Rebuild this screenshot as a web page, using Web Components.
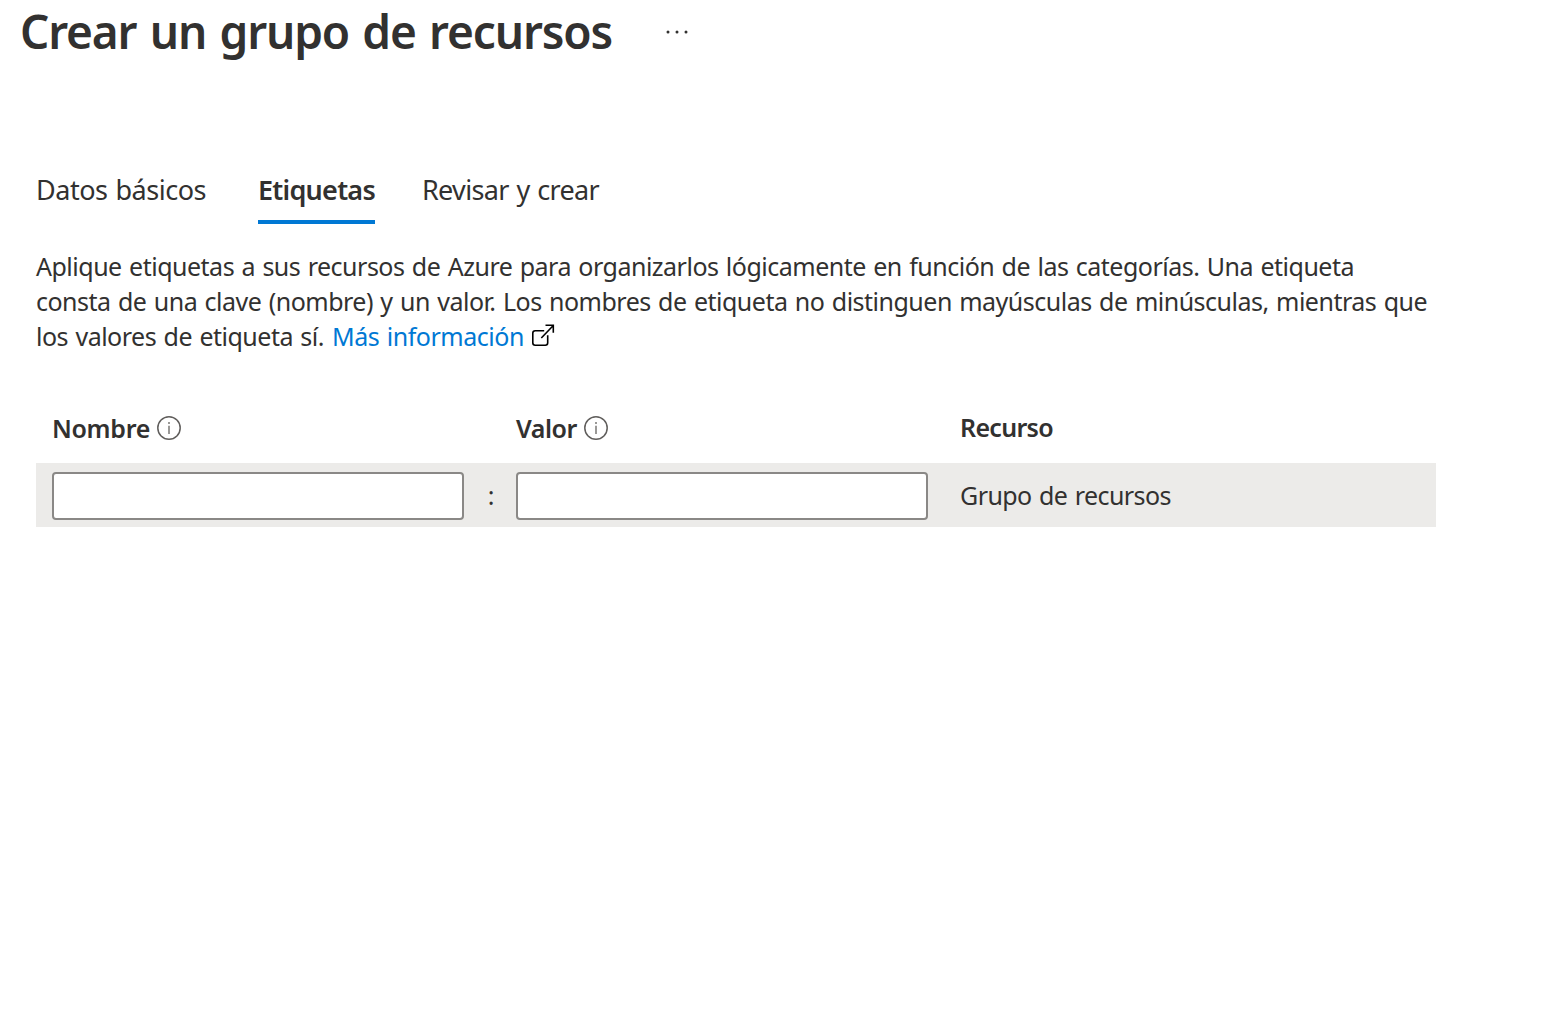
<!DOCTYPE html>
<html lang="es">
<head>
<meta charset="utf-8">
<title>Crear un grupo de recursos</title>
<style>
html, body { margin: 0; background: #fff; }
body { height: 1010px; overflow: hidden; font-family: "Noto Sans", "Open Sans", sans-serif; color: #323130; }
</style>
</head>
<body>
<create-group></create-group>
<script>
const define = (name, html, connected) => {
  const template = document.createElement('template');
  template.innerHTML = html;
  customElements.define(name, class extends HTMLElement {
    constructor() {
      super();
      this.attachShadow({ mode: 'open' }).append(template.content.cloneNode(true));
    }
    connectedCallback() { if (connected) connected.call(this); }
  });
};

// Text run whose tracking is adjusted to fill the width given in "w".
define('text-run', `
  <style>:host { display: inline-block; white-space: nowrap; } span { display: inline-block; white-space: pre; word-spacing: .055em; }</style>
  <span><slot></slot></span>`,
  function () {
    const span = this.shadowRoot.querySelector('span');
    const w = Number(this.getAttribute('w'));
    const n = this.textContent.length;
    const gap = (w - span.getBoundingClientRect().width) / n;
    span.style.letterSpacing = gap.toFixed(3) + 'px';
    this.style.width = w + 'px';
  });

define('info-icon', `
  <style>:host { display: block; width: 24px; height: 24px; } svg { display: block; }</style>
  <svg width="24" height="24" viewBox="0 0 24 24" fill="none" stroke="#605e5c" stroke-width="1.5">
    <circle cx="12" cy="12" r="11.2"/>
    <path d="M12 9.7V18M12 6v2" stroke="#7a7876"/>
  </svg>`);

define('external-icon', `
  <style>:host { display: block; width: 24px; height: 24px; } svg { display: block; }</style>
  <svg width="24" height="24" viewBox="0 0 24 24" fill="none" stroke="#000" stroke-width="1.6">
    <path d="M12.2 6.7H3.2Q.8 6.7.8 9.1V18.8Q.8 21.2 3.2 21.2H13.3Q15.7 21.2 15.7 18.8V11.2M9.3 14L21.3 1.5M13.5 1.3H21.3V8.8"/>
  </svg>`);

define('page-title', `
  <style>
    :host { display: flex; height: 60px; padding-left: 20px; }
    h1 { margin: 0; font-size: 46px; line-height: 62px; font-weight: 600; }
    button { margin: 26px 0 0 50px; padding: 4px; border: 0; background: none; height: 12px; display: block; }
    svg { display: block; }
  </style>
  <h1><slot></slot></h1>
  <button aria-label="Más"><svg width="22" height="4" viewBox="0 0 22 4" fill="#323130"><circle cx="2" cy="2" r="1.5"/><circle cx="11" cy="2" r="1.5"/><circle cx="20" cy="2" r="1.5"/></svg></button>`);

define('tab-item', `
  <style>
    :host { display: block; box-sizing: border-box; height: 54px; font-size: 27px; line-height: 40px; }
    :host([selected]) { font-weight: 600; border-bottom: 4px solid #0078d4; }
  </style><slot></slot>`);

define('tab-list', `
  <style>:host { display: flex; margin: 110px 0 0 36px; }
    ::slotted(:nth-child(2)) { margin: 0 47px 0 52px; }</style>
  <slot></slot>`);

define('tag-intro', `
  <style>
    :host { display: block; margin: 25px 0 0 36px; font-size: 25px; line-height: 35px; }
    .line { display: flex; height: 35px; }
    a { color: #0078d4; margin-left: 8px; }
    external-icon { margin: 5px 0 0 8px; }
  </style>
  <div class="line"><text-run w="1318">Aplique etiquetas a sus recursos de Azure para organizarlos lógicamente en función de las categorías. Una etiqueta</text-run></div>
  <div class="line"><text-run w="1391">consta de una clave (nombre) y un valor. Los nombres de etiqueta no distinguen mayúsculas de minúsculas, mientras que</text-run></div>
  <div class="line"><text-run w="288">los valores de etiqueta sí.</text-run><a><text-run w="192">Más información</text-run></a><external-icon></external-icon></div>`);

define('column-head', `
  <style>:host { display: flex; font-weight: 600; } info-icon { margin: 5px 0 0 7px; }
    :host([plain]) info-icon { display: none; } :host([plain]) { margin-top: -1px; }</style>
  <slot></slot><info-icon></info-icon>`);

define('text-box', `
  <style>:host { display: block; } input { display: block; box-sizing: border-box; width: 412px; height: 48px; border: 2px solid #8a8886; border-radius: 4px; background: #fff; outline: 0; }</style>
  <input type="text">`);

define('tag-table', `
  <style>
    :host { display: block; width: 1400px; margin: 57px 0 0 36px; font-size: 25px; line-height: 35px; }
    .row { display: grid; grid-template-columns: 412px 52px 412px auto; padding-left: 16px; }
    .head { height: 52px; }
    .body { height: 64px; background: #ecebe9; align-items: center; }
    .body text-box { padding-top: 2px; }
    .colon { text-align: center; padding-left: 2px; }
    .last { margin-left: 32px; }
  </style>
  <div class="row head">
    <column-head><text-run w="98">Nombre</text-run></column-head><span></span>
    <column-head><text-run w="61">Valor</text-run></column-head>
    <column-head plain class="last"><text-run w="93">Recurso</text-run></column-head>
  </div>
  <div class="row body">
    <text-box></text-box><span class="colon">:</span><text-box></text-box>
    <span class="last"><text-run w="211">Grupo de recursos</text-run></span>
  </div>`);

define('create-group', `
  <style>:host { display: block; }</style>
  <page-title><text-run w="592">Crear un grupo de recursos</text-run></page-title>
  <tab-list>
    <tab-item><text-run w="170">Datos básicos</text-run></tab-item>
    <tab-item selected><text-run w="117">Etiquetas</text-run></tab-item>
    <tab-item><text-run w="177">Revisar y crear</text-run></tab-item>
  </tab-list>
  <tag-intro></tag-intro>
  <tag-table></tag-table>`);
</script>
</body>
</html>
